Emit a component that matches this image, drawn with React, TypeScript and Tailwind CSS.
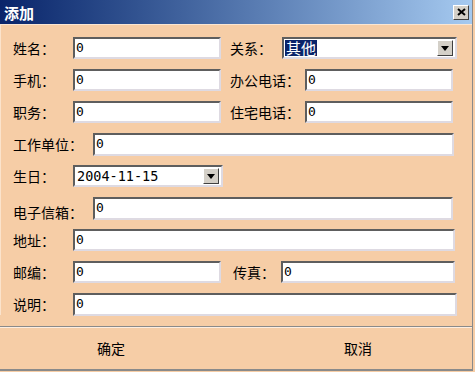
import React from 'react'

const cjk = { fontFamily: '"Noto Sans CJK SC", "Noto Sans", sans-serif' }
const mono = { fontFamily: '"DejaVu Sans Mono", "Liberation Mono", monospace' }

const sunken =
  'bg-white border-2 border-t-[#5e5e5e] border-l-[#5e5e5e] border-b-[#dedae2] border-r-[#dedae2]'

function Label({ text, w, ml = 0 }: { text: string; w: number; ml?: number }) {
  return (
    <span
      className="text-[14px] leading-[22px] text-black whitespace-nowrap shrink-0"
      style={{ width: w, marginLeft: ml, ...cjk }}
    >
      {text}
    </span>
  )
}

function Box({ w, value = '0', h = 22 }: { w: number; value?: string; h?: number }) {
  return (
    <div
      className={`${sunken} shrink-0 flex items-center pl-[1px] text-[13px] text-black`}
      style={{ width: w, height: h, ...mono }}
    >
      {value}
    </div>
  )
}

function DropBtn() {
  return (
    <div className="w-[16px] h-[16px] bg-[#d4d0c8] border border-t-white border-l-white border-b-[#404040] border-r-[#404040] flex items-center justify-center shrink-0">
      <svg width="8" height="5" viewBox="0 0 8 5">
        <path d="M0 0h8L4 5z" fill="#000" />
      </svg>
    </div>
  )
}

function Select({ w, children }: { w: number; children: React.ReactNode }) {
  return (
    <div
      className={`${sunken} shrink-0 h-[22px] flex items-center justify-between pl-[1px] pr-[2px]`}
      style={{ width: w }}
    >
      {children}
      <DropBtn />
    </div>
  )
}

export default function App() {
  return (
    <div className="w-[475px] h-[372px] bg-[#f6cda6] overflow-hidden relative">
      <div className="w-[473px] h-[371px] border-r border-b-2 border-r-[#8a8a8a] border-b-[#8a8a8a] flex flex-col">
        {/* title bar */}
        <div className="h-[24px] bg-gradient-to-r from-[#0a246a] to-[#a6caf0] flex items-center justify-between pl-[4px] pr-[3px] shrink-0">
          <span className="text-white font-bold text-[15px] leading-none" style={cjk}>
            添加
          </span>
          <div className="w-[16px] h-[15px] bg-[#d4d0c8] border border-t-white border-l-white border-b-[#404040] border-r-[#404040] flex items-center justify-center">
            <svg width="9" height="8" viewBox="0 0 9 8">
              <path d="M1 1L8 7M8 1L1 7" stroke="#000" strokeWidth="2" />
            </svg>
          </div>
        </div>
        <div className="h-px bg-[#fbe6d2] shrink-0" />

        {/* form */}
        <div className="flex flex-col gap-[10px] pt-[12px] pl-[12px] border-l border-l-[#fbe3cc]">
          <div className="flex items-center h-[22px]">
            <Label text="姓名：" w={60} />
            <Box w={148} />
            <Label text="关系：" w={52} ml={9} />
            <Select w={175}>
              <span
                className="bg-[#0a246a] text-white text-[15px] leading-[16px] px-[1px]"
                style={cjk}
              >
                其他
              </span>
            </Select>
          </div>
          <div className="flex items-center h-[22px]">
            <Label text="手机：" w={60} />
            <Box w={148} />
            <Label text="办公电话：" w={75} ml={9} />
            <Box w={148} />
          </div>
          <div className="flex items-center h-[22px]">
            <Label text="职务：" w={60} />
            <Box w={148} />
            <Label text="住宅电话：" w={75} ml={9} />
            <Box w={148} />
          </div>
          <div className="flex items-center h-[22px]">
            <Label text="工作单位：" w={80} />
            <Box w={361} h={23} />
          </div>
          <div className="flex items-center h-[22px]">
            <Label text="生日：" w={60} />
            <Select w={150}>
              <span className="text-[13.5px] text-black pl-[1px]" style={mono}>
                2004-11-15
              </span>
            </Select>
          </div>
          <div className="flex items-center h-[22px]">
            <span
              className="text-[14px] leading-[22px] w-[80px] shrink-0 pt-[8px]"
              style={cjk}
            >
              电子信箱：
            </span>
            <Box w={360} h={23} />
          </div>
          <div className="flex items-center h-[22px]">
            <Label text="地址：" w={60} />
            <Box w={382} />
          </div>
          <div className="flex items-center h-[22px]">
            <Label text="邮编：" w={60} />
            <Box w={148} />
            <Label text="传真：" w={48} ml={12} />
            <Box w={174} />
          </div>
          <div className="flex items-center h-[22px]">
            <Label text="说明：" w={60} />
            <Box w={384} h={23} />
          </div>
        </div>

        {/* buttons */}
        <div className="mt-[11px] border-t border-t-[#8a8a8a] shrink-0" />
        <div className="border-t border-t-[#fdeee0] flex-1 flex items-center">
          <div className="w-[222px] text-center text-[14px] text-black" style={cjk}>
            确定
          </div>
          <div className="w-[22px]" />
          <div className="w-[228px] text-center text-[14px] text-black" style={cjk}>
            取消
          </div>
        </div>
      </div>
    </div>
  )
}
